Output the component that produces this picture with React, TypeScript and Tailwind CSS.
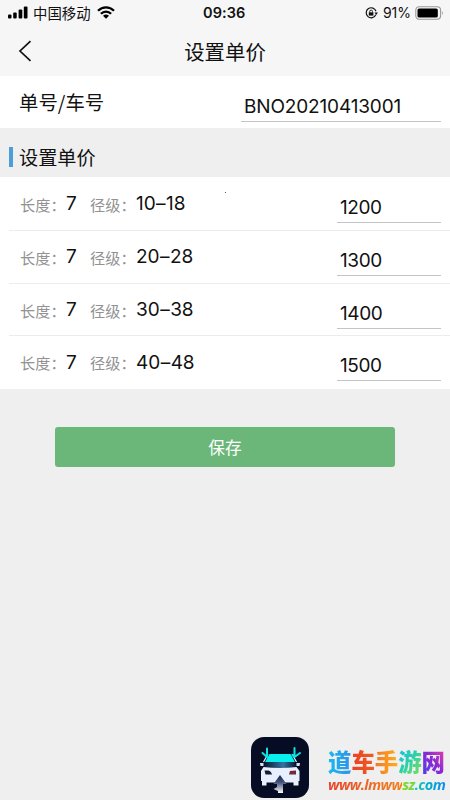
const rows = [
  { length: '7', from: '10', to: '18', price: '1200' },
  { length: '7', from: '20', to: '28', price: '1300' },
  { length: '7', from: '30', to: '38', price: '1400' },
  { length: '7', from: '40', to: '48', price: '1500' },
];

function StatusBar() {
  return (
    <div className="flex h-[25px] items-center pl-[8px] pr-[6px] text-[#111]">
      <svg width="20" height="13" viewBox="0 0 20 13" fill="#000">
        <rect x="0" y="8.5" width="3.5" height="4" rx="1" />
        <rect x="5.2" y="6.5" width="3.5" height="6" rx="1" />
        <rect x="10.6" y="3.5" width="3.7" height="9" rx="1" />
        <rect x="15.8" y="0.5" width="3.7" height="12" rx="1" />
      </svg>
      <span className="ml-[5px] w-[58px] whitespace-nowrap text-[14.4px] leading-[22px]">中国移动</span>
      <svg className="ml-[6px]" width="18" height="13" viewBox="0 0 18 13" fill="none" stroke="#000" strokeWidth="2.3">
        <path d="M1 4.8 C5.5 .2 12.5 .2 17 4.8" />
        <path d="M3.9 7.8 C6.8 4.9 11.2 4.9 14.1 7.8" />
        <path d="M6 9.7 Q9 7.2 12 9.7 L9 12.8Z" fill="#000" stroke="none" />
      </svg>
      <span className="ml-[88px] w-[44px] whitespace-nowrap font-['Inter'] text-[14.5px] font-semibold leading-[24px] tracking-[0.1px]">09:36</span>
      <svg className="ml-auto" width="13" height="12" viewBox="0 0 13 12" fill="none" stroke="#111" strokeWidth="1.2">
        <path d="M10.8 7.8 A5 5 0 1 1 11 4.3" />
        <path d="M9.5 5.5 L13 5.5 L11.2 8Z" fill="#111" stroke="none" />
        <rect x="3.8" y="5.3" width="4.6" height="3.3" fill="#111" stroke="none" />
        <path d="M4.7 5.5 V4.5 a1.4 1.4 0 0 1 2.8 0 V5.5" strokeWidth=".9" />
      </svg>
      <span className="ml-[5px] w-[30px] whitespace-nowrap font-['Inter'] text-[14px] leading-[24px] tracking-[-0.1px]">91%</span>
      <svg className="ml-[2px]" width="29" height="14" viewBox="0 0 29 14">
        <rect x=".8" y=".7" width="24.8" height="12.6" rx="3.5" fill="none" stroke="#999" strokeWidth="1.1" />
        <rect x="2.5" y="2.4" width="20.3" height="9.2" rx="1.7" fill="#000" />
        <path d="M27 4.7 q1.8 2.3 0 4.6Z" fill="#999" />
      </svg>
    </div>
  );
}

function Field({ value, className }: { value: string; className: string }) {
  return (
    <div className={`h-[27px] whitespace-nowrap border-b border-[#c4c4c4] pl-[3px] font-['Inter'] text-[19px] font-normal leading-[24px] text-[#111] ${className}`}>
      {value}
    </div>
  );
}

function AppLogo() {
  return (
    <svg width="58" height="61" viewBox="0 0 58 61">
      <defs>
        <linearGradient id="glass" x1="0" x2="1" y1="0" y2="0">
          <stop offset="0" stopColor="#07132c" />
          <stop offset=".6" stopColor="#3474a2" />
          <stop offset="1" stopColor="#07132c" />
        </linearGradient>
        <linearGradient id="road" gradientUnits="userSpaceOnUse" x1="0" x2="0" y1="38" y2="56">
          <stop offset="0" stopColor="#17264b" />
          <stop offset=".4" stopColor="#44517a" />
          <stop offset="1" stopColor="#fff" />
        </linearGradient>
      </defs>
      <rect width="58" height="61" rx="13" fill="#050c24" />
      <path d="M18.5 17 H39.5 L44 25 H14Z" fill="#08efee" />
      <path d="M12.5 25 L17 17 M45.5 25 L41 17" stroke="#eaf1ff" strokeWidth="1.2" />
      <path d="M14 25 H44 L45.5 30.5 Q29 32 12.5 30.5Z" fill="url(#glass)" />
      <path d="M12.5 30 Q29 32 45.5 30 L48.5 34 V44 H47.5 V48.5 H42.5 V45.5 H15.5 V48.5 H11 V44 H10 V34Z" fill="#e8efff" />
      <path d="M9 26 h3.5 v3 h-3Z M45.5 26 h3.5 l-.5 3 h-3Z" fill="#d8e4fa" />
      <path d="M13.5 33.5 H17.5 Q20 34 21 37.5 H14.5Z" fill="#172033" />
      <path d="M39 34 L45 33.5 V37.5 H38Z" fill="#762936" />
      <path d="M29 38 L35.5 47 H22.5Z M26 46 H32 V56 H27 V54 L22.5 52 L26 50Z" fill="url(#road)" />
      <g fill="none" stroke="#08e5e5" strokeWidth="2" strokeLinecap="round" strokeLinejoin="round">
        <path d="M16 11.5 V20 M11.5 16 L16 20" />
        <path d="M43.5 11 V20 L49 16 M43.5 20 L41.5 18" />
      </g>
    </svg>
  );
}

function SiteMark() {
  return (
    <div className="w-[119px] whitespace-nowrap">
      <div className="flex h-[29px] text-[23.4px] font-black leading-[28px]">
        <span className="bg-linear-to-r from-[#13baf0] to-[#2f92e8] bg-clip-text text-transparent">道</span>
        <span className="bg-linear-to-r from-[#ec3c25] to-[#ed5e21] bg-clip-text text-transparent">车</span>
        <span className="bg-linear-to-r from-[#f17822] to-[#ffaf1a] bg-clip-text text-transparent">手</span>
        <span className="bg-linear-to-br from-[#22b9ec] via-[#2bd2a3] to-[#7edb43] bg-clip-text text-transparent">游</span>
        <span className="bg-linear-to-tr from-[#453ceb] via-[#8a26d5] to-[#f42aa0] bg-clip-text text-transparent">网</span>
      </div>
      <div className="flex font-['Open_Sans'] text-[14.5px] font-bold italic leading-[17px] tracking-[-0.55px]">
        <span className="bg-linear-to-r from-[#e5402a] to-[#f0811d] bg-clip-text text-transparent">www.lmww</span>
        <span className="text-[#76d830]">sz</span>
        <span className="bg-linear-to-r from-[#19c8ad] to-[#1686ee] bg-clip-text pr-[2px] text-transparent">.com</span>
      </div>
    </div>
  );
}

export default function App() {
  return (
    <div className="flex h-[800px] w-[450px] flex-col overflow-hidden bg-[#efefef] font-['Noto_Sans_CJK_SC',sans-serif] text-[#111]">
      <header className="h-[76px] shrink-0 bg-[#f6f6f6]">
        <StatusBar />
        <div className="grid h-[51px] grid-cols-[60px_1fr_60px] items-center">
          <svg className="ml-[18px]" width="14" height="22" viewBox="0 0 14 22" fill="none" stroke="#111" strokeWidth="1.7">
            <path d="M12.5 1.2 L2 11 L12.5 20.8" />
          </svg>
          <h1 className="text-center text-[20.4px] font-normal leading-[28px]">设置单价</h1>
        </div>
      </header>

      <section className="flex h-[52px] shrink-0 justify-between bg-white pl-[19px] pr-[9px]">
        <span className="mt-[12px] text-[19.4px] leading-[28px]">单号/车号</span>
        <Field value="BNO20210413001" className="mt-[19px] w-[200px] tracking-[-0.15px]" />
      </section>

      <div className="flex h-[49px] shrink-0 items-center pl-[9px] pt-[9px]">
        <span className="h-[20px] w-[4px] bg-[#4b9ed8]" />
        <h2 className="ml-[6px] text-[19.2px] font-normal leading-[28px]">设置单价</h2>
      </div>

      <main className="relative h-[212px] shrink-0 bg-white pt-px">
        <span className="absolute left-[225px] top-[15px] h-px w-px bg-[#555]" />
        {rows.map((row) => (
          <div key={row.from} className="ml-[9px] flex h-[52.8px] border-b border-[#ececec] pl-[11px] pr-[9px] last:border-b-0">
            <div className="flex h-[52.8px] items-center whitespace-nowrap text-[15.2px] text-[#929292]">
              <span className="w-[46px]">长度：</span>
              <span className="w-[24px] font-['Inter'] text-[19px] text-[#111]">7</span>
              <span className="w-[46px]">径级：</span>
              <span className="font-['Inter'] text-[19px] tracking-[-0.1px] text-[#111]">
                {row.from}
                <span className="mx-[0.6px]">–</span>
                {row.to}
              </span>
            </div>
            <Field value={row.price} className="ml-auto mt-[18px] w-[104px] tracking-[-0.4px]" />
          </div>
        ))}
      </main>

      <button className="mx-[55px] mt-[38px] h-[40px] shrink-0 rounded-[3px] bg-[#6bb779] text-[16.7px] leading-[38px] text-white">
        保存
      </button>

      <footer className="mt-auto flex items-start justify-end gap-[19px] pb-[2px] pr-[3px]">
        <AppLogo />
        <div className="mt-[10px]">
          <SiteMark />
        </div>
      </footer>
    </div>
  );
}
